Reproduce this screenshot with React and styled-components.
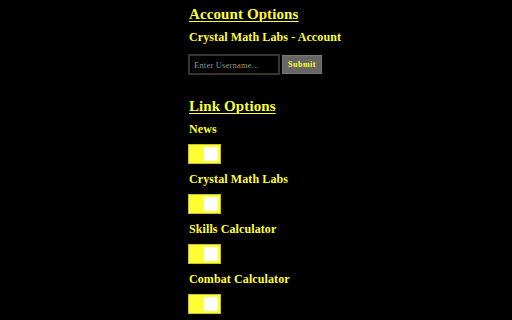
import styled, { createGlobalStyle } from "styled-components";

const GlobalStyle = createGlobalStyle`
    html, body {
        margin: 0;
        padding: 0;
        background: #000;
    }
    body {
        font-family: "Liberation Serif", "DejaVu Serif", serif;
        color: #ffff33;
    }
`;

const links = ["News", "Crystal Math Labs", "Skills Calculator", "Combat Calculator"];

function Toggle({ on }) {
    return (
        <Switch $on={on}>
            <Knob $on={on} />
        </Switch>
    );
}

export default function App() {
    return (
        <>
            <GlobalStyle />
            <Page>
                <Section>
                    <Title>Account Options</Title>
                    <Label>Crystal Math Labs - Account</Label>
                    <Form onSubmit={(e) => e.preventDefault()}>
                        <Input placeholder="Enter Username..." />
                        <SubmitButton type="submit">Submit</SubmitButton>
                    </Form>
                </Section>
                <Section>
                    <Title>Link Options</Title>
                    <List>
                        {links.map((name) => (
                            <Item key={name}>
                                <Label>{name}</Label>
                                <Toggle on />
                            </Item>
                        ))}
                    </List>
                </Section>
            </Page>
        </>
    );
}

const Page = styled.div`
    padding: 5px 0 0 188px;
    display: flex;
    flex-direction: column;
    gap: 22px;
`;

const Section = styled.div`
    display: flex;
    flex-direction: column;
`;

const Title = styled.h2`
    margin: 0 0 7px 1px;
    font-size: 15px;
    line-height: 18px;
    font-weight: bold;
    letter-spacing: 0.1px;
    text-decoration: underline;
    text-decoration-thickness: 1px;
    text-underline-offset: 2px;
    color: #ffff33;
`;

const Label = styled.div`
    margin-left: 1px;
    font-size: 12px;
    line-height: 14px;
    font-weight: bold;
    letter-spacing: 0.1px;
    color: #ffff33;
`;

const Form = styled.form`
    display: flex;
    align-items: center;
    gap: 2px;
    margin-top: 10px;
`;

const Input = styled.input`
    box-sizing: border-box;
    width: 92px;
    height: 21px;
    padding: 0 4px;
    background: #000;
    border: 2px solid #3a352b;
    outline: none;
    font-family: inherit;
    font-size: 8.5px;
    letter-spacing: 0.2px;
    color: #ddd;

    &::placeholder {
        color: #9a968c;
    }
`;

const SubmitButton = styled.button`
    box-sizing: border-box;
    width: 40px;
    height: 19px;
    padding: 0;
    background: #666;
    border: 1px solid #777;
    font-family: inherit;
    font-size: 8px;
    font-weight: bold;
    letter-spacing: 0.5px;
    color: #ffff33;
    cursor: pointer;
`;

const List = styled.div`
    display: flex;
    flex-direction: column;
    gap: 8px;
`;

const Item = styled.div`
    display: flex;
    flex-direction: column;
    align-items: flex-start;
    gap: 8px;
`;

const Switch = styled.div`
    box-sizing: border-box;
    width: 33px;
    height: 20px;
    padding: 2px;
    display: flex;
    justify-content: ${(p) => (p.$on ? "flex-end" : "flex-start")};
    align-items: center;
    background: #ffff33;
    border: 1px solid #c8c020;
    cursor: pointer;
`;

const Knob = styled.div`
    width: 14px;
    height: 14px;
    background: #fff;
`;
